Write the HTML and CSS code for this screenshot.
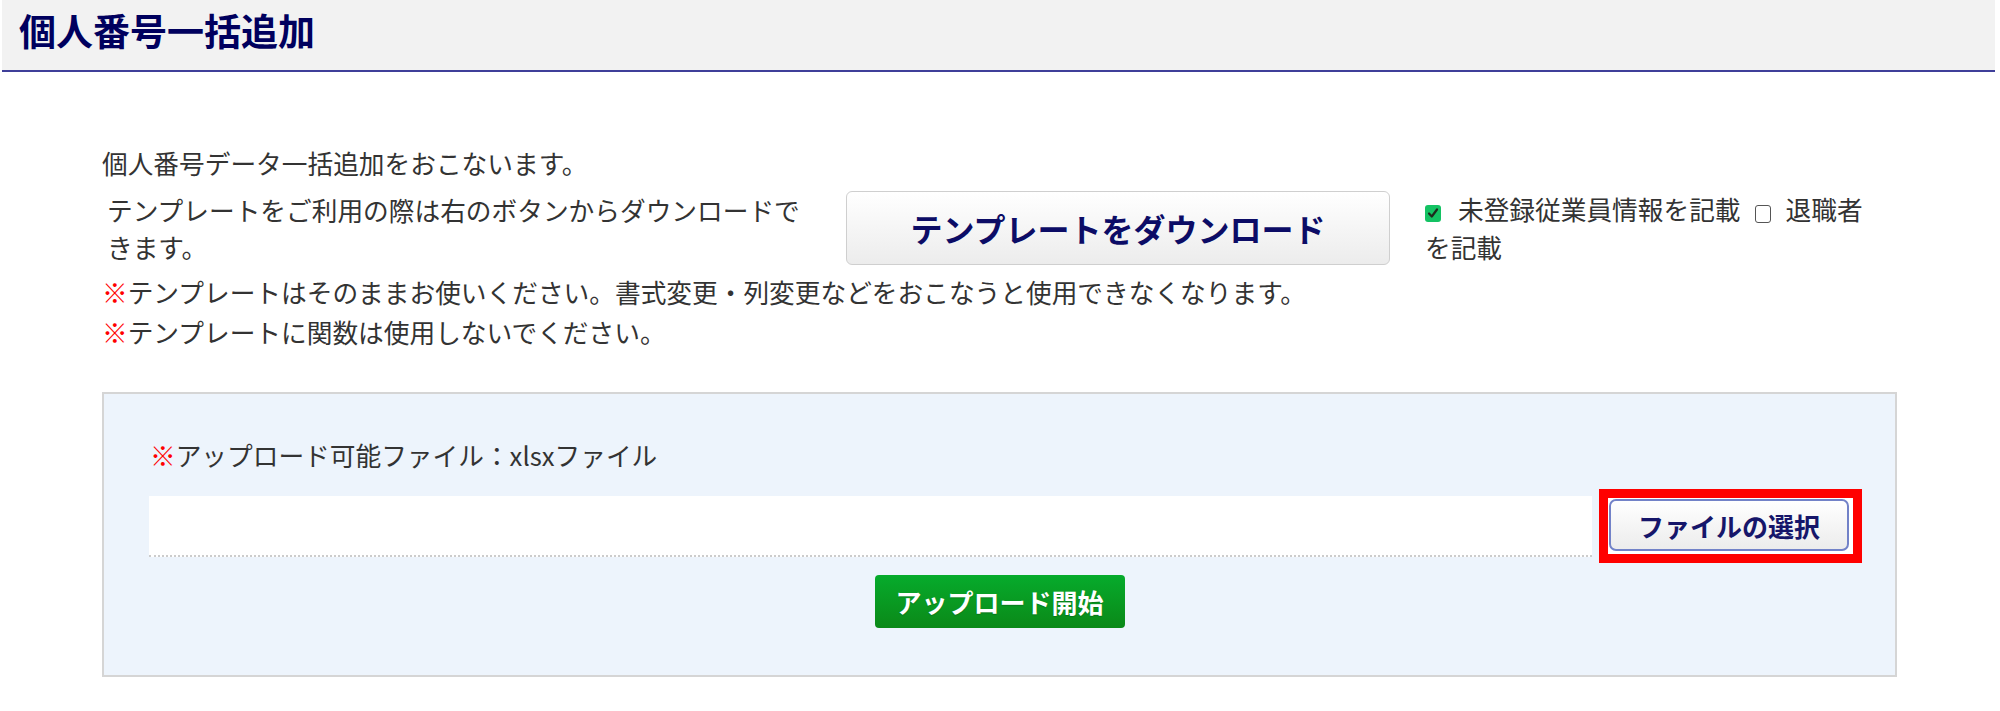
FILE: index.html
```html
<!DOCTYPE html>
<html lang="ja">
<head>
<meta charset="utf-8">
<title>個人番号一括追加</title>
<link rel="stylesheet" href="styles.css">
</head>
<body>
<header class="page-header">
  <h1 class="page-title">個人番号一括追加</h1>
</header>
<main class="content">
  <p class="intro">個人番号データ一括追加をおこないます。</p>
  <div class="template-row">
    <div class="template-text">テンプレートをご利用の際は右のボタンからダウンロードできます。</div>
    <button class="btn-download" type="button">テンプレートをダウンロード</button>
    <div class="options">
      <span class="cb cb-checked"><svg viewBox="0 0 16 16" width="16" height="16"><path d="M4 8.5 L6.8 11.5 L12 4.5" fill="none" stroke="#1d2a1d" stroke-width="2.2" stroke-linecap="round" stroke-linejoin="round"/></svg></span><span class="opt-label">未登録従業員情報を記載</span><span class="cb cb-empty"></span><span class="opt-label">退職者を記載</span>
    </div>
  </div>
  <div class="notes">
    <p class="note"><span class="mark">※</span>テンプレートはそのままお使いください。書式変更・列変更などをおこなうと使用できなくなります。</p>
    <p class="note"><span class="mark">※</span>テンプレートに関数は使用しないでください。</p>
  </div>
  <section class="upload-panel">
    <p class="upload-label"><span class="mark">※</span>アップロード可能ファイル：xlsxファイル</p>
    <div class="file-row">
      <div class="file-field"></div>
      <div class="highlight">
        <button class="btn-file" type="button">ファイルの選択</button>
      </div>
    </div>
    <div class="upload-actions">
      <button class="btn-upload" type="button">アップロード開始</button>
    </div>
  </section>
</main>
</body>
</html>
```
FILE: styles.css
```css
html, body {
  margin: 0;
  padding: 0;
  background: #ffffff;
}
body {
  font-family: "Noto Sans CJK JP", "Noto Sans", sans-serif;
  color: #333333;
  font-size: 25.7px;
}
.page-header {
  margin: 0 5px 0 2px;
  height: 70px;
  background: #f2f2f2;
  border-bottom: 2px solid #3f3f99;
  padding-left: 17px;
  box-sizing: content-box;
}
.page-title {
  margin: 0;
  font-size: 37px;
  line-height: 61px;
  font-weight: 700;
  color: #00005e;
}
.content {
  padding-left: 102px;
}
.intro {
  margin: 71px 0 0 0;
  line-height: 40px;
}
.template-row {
  display: flex;
  align-items: center;
  margin-top: 6px;
  height: 77px;
}
.template-text {
  width: 705px;
  padding-left: 5px;
  line-height: 37px;
  flex: none;
}
.btn-download {
  flex: none;
  margin-left: 34px;
  width: 544px;
  height: 74px;
  border: 1px solid #cfcfcf;
  border-radius: 6px;
  background: linear-gradient(#ffffff, #ececec);
  font-family: "Noto Sans CJK JP", "Noto Sans", sans-serif;
  font-size: 32px;
  font-weight: 700;
  color: #0c0c66;
  padding: 0;
  cursor: pointer;
}
.options {
  flex: none;
  margin-left: 35px;
  width: 455px;
  line-height: 38px;
}
.cb {
  display: inline-block;
  width: 16px;
  height: 17px;
  box-sizing: border-box;
  vertical-align: -2px;
  border-radius: 3px;
}
.cb svg {
  display: block;
  margin-top: 0.5px;
}
.cb-checked {
  background: #14c263;
  margin-right: 17px;
}
.cb-empty {
  width: 16px;
  height: 18px;
  border: 1.5px solid #555555;
  background: #ffffff;
  margin: 0 15px 0 14px;
  vertical-align: -3px;
}
.notes {
  margin-top: 6px;
}
.note {
  margin: 0;
  line-height: 40px;
}
.mark {
  color: #ff0000;
}
.upload-panel {
  margin-top: 40px;
  width: 1795px;
  box-sizing: border-box;
  background: #edf4fc;
  border: 2px solid #d5d5d5;
  padding: 41px 33px 47px 45px;
}
.upload-label {
  margin: 0;
  line-height: 40px;
  padding-left: 1px;
}
.file-row {
  display: flex;
  align-items: center;
  margin-top: 14px;
  height: 74px;
}
.file-field {
  flex: 1;
  height: 61px;
  box-sizing: border-box;
  background: #ffffff;
  border-bottom: 2px dotted #cccccc;
}
.highlight {
  flex: none;
  margin-left: 7px;
  border: 9px solid #ff0000;
  background: #ffffff;
  padding: 1px 4px 3px 1px;
}
.btn-file {
  display: block;
  width: 240px;
  height: 52px;
  border: 2px solid #7282c8;
  border-radius: 7px;
  background: linear-gradient(#ffffff, #ececec);
  font-family: "Noto Sans CJK JP", "Noto Sans", sans-serif;
  font-size: 26px;
  font-weight: 700;
  color: #16166a;
  padding: 0;
  cursor: pointer;
}
.upload-actions {
  display: flex;
  justify-content: center;
  margin-top: 12px;
  padding-right: 12px;
}
.btn-upload {
  width: 250px;
  height: 53px;
  border: none;
  border-radius: 4px;
  background: linear-gradient(#06ab2c, #0b8918);
  font-family: "Noto Sans CJK JP", "Noto Sans", sans-serif;
  font-size: 26px;
  font-weight: 700;
  color: #ffffff;
  padding: 0;
  cursor: pointer;
  text-shadow: 0 1px 1px rgba(0, 0, 0, 0.2);
}
```
